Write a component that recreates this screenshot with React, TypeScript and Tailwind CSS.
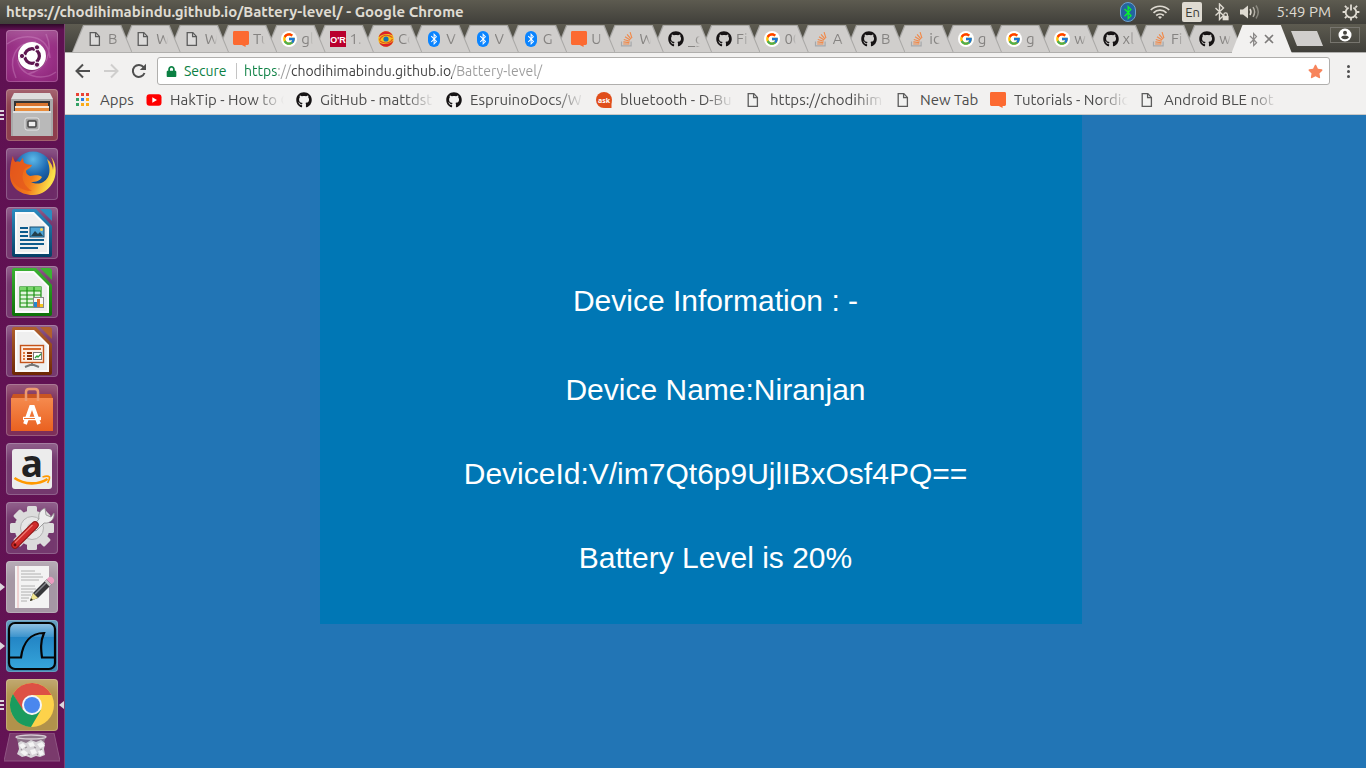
import React from "react";
import { FaBluetoothB, FaGithub, FaLock, FaStar } from "react-icons/fa";
import { FcGoogle } from "react-icons/fc";

const barFont = "font-['Ubuntu','Noto_Sans',sans-serif]";

/* ---------- small favicons ---------- */

function PageIcon() {
  return (
    <svg viewBox="0 0 16 16" className="size-4 shrink-0" fill="none" stroke="#5c5c5c" strokeWidth="1.3">
      <path d="M2.2 1.6h5.6l3.6 3.8v9H2.200z" fill="#f4f4f4" fillOpacity=".35" />
      <path d="M7.600 1.8v3.800h3.800" />
    </svg>
  );
}

function SpeechIcon() {
  return (
    <svg viewBox="0 0 16 16" className="size-4 shrink-0">
      <path d="M1.4 0h13.2Q16 0 16 1.4v11.2q0 1.4-1.4 1.4H12.6v2L8.8 14H1.4Q0 14 0 12.6V1.4Q0 0 1.4 0z" fill="#fc6a31" />
    </svg>
  );
}

function GoogleIcon() {
  return (
    <span className="flex size-4 shrink-0 items-center justify-center rounded-full bg-white">
      <FcGoogle className="size-[14px]" />
    </span>
  );
}

function OReillyIcon() {
  return (
    <svg viewBox="0 0 16 16" className="size-4 shrink-0">
      <rect width="16" height="16" fill="#b9002d" />
      <text x="8" y="11.500" textAnchor="middle" fontFamily="Liberation Sans, sans-serif" fontWeight="700" fontSize="9" fill="#fff">
        O'R
      </text>
    </svg>
  );
}

function SwirlIcon() {
  return (
    <svg viewBox="0 0 16 16" className="size-4 shrink-0">
      <circle cx="8" cy="8" r="7.8" fill="#f5c21b" />
      <path d="M.6 6.2C1.6 2.600 4.600.2 8 .2c3.200 0 5.600 1.800 7 4.600C12 2.400 5 2 .6 6.200z" fill="#d8232a" />
      <path d="M15.400 9.800c-1 3.600-4 6-7.400 6-3.200 0-5.600-1.800-7-4.600 3 2.400 10 2.800 14.400-1.400z" fill="#d8232a" />
      <path d="M1.500 9.500C3 4.500 9 2.500 14.500 6.500M14.500 8C13 12 7 13.500 2 10" fill="none" stroke="#e2511f" strokeWidth="1.100" />
      <circle cx="8" cy="8" r="3.300" fill="#f5c21b" />
      <circle cx="8" cy="8" r="2.600" fill="#1673b1" />
    </svg>
  );
}

function BluetoothIcon() {
  return (
    <span className="flex size-4 shrink-0 items-center justify-center">
      <span className="flex h-4 w-3 items-center justify-center rounded-full bg-[#0a84ff]">
        <FaBluetoothB className="size-3 text-white" />
      </span>
    </span>
  );
}

function GithubIcon() {
  return <FaGithub className="size-4 shrink-0 text-[#161314]" />;
}

function StackIcon() {
  return (
    <svg viewBox="0 0 16 16" className="size-4 shrink-0" fill="none">
      <path d="M2.500 10.500v4.400h9.600v-4.400" stroke="#a5a8ab" strokeWidth="1.200" />
      <g stroke="#f08a4b" strokeWidth="1.200">
        <path d="M4.200 13h6.200M4.300 10.900l6.100.7M4.800 8.500l5.900 1.800M6 5.800l5.200 3.200M8.100 3.300l4 4.800M11.100 1.200l1.800 6" />
      </g>
    </svg>
  );
}

function YoutubeIcon() {
  return (
    <svg viewBox="0 0 16 16" className="size-4 shrink-0">
      <rect x=".5" y="2.200" width="15" height="11.600" rx="3" fill="#f00" />
      <path d="M6.300 5.300v5.400L11 8z" fill="#fff" />
    </svg>
  );
}

function AskIcon() {
  return (
    <svg viewBox="0 0 16 16" className="size-4 shrink-0">
      <circle cx="8" cy="8" r="8" fill="#e04e1b" />
      <path d="M8 16h7.500V9z" fill="#e04e1b" />
      <text x="8" y="10.500" textAnchor="middle" fontFamily="Noto Sans, sans-serif" fontWeight="700" fontSize="7" fill="#fff">
        ask
      </text>
    </svg>
  );
}

function AppsIcon() {
  const colours = ["#ea4335", "#ea4335", "#ea4335", "#34a065", "#2f7de1", "#fbab18", "#34a065", "#fbab18", "#fbab18"];
  return (
    <svg viewBox="0 0 16 16" className="size-4 shrink-0">
      {colours.map((c, i) => (
        <rect key={i} x={(i % 3) * 5} y={Math.floor(i / 3) * 5 + 1} width="3" height="3" fill={c} />
      ))}
    </svg>
  );
}

const icons = {
  page: PageIcon,
  speech: SpeechIcon,
  google: GoogleIcon,
  oreilly: OReillyIcon,
  swirl: SwirlIcon,
  bluetooth: BluetoothIcon,
  github: GithubIcon,
  stack: StackIcon,
  youtube: YoutubeIcon,
  ask: AskIcon,
  apps: AppsIcon,
};
type IconName = keyof typeof icons;

/* ---------- launcher ---------- */

function DocBase({ id, dark, light }: { id: string; dark: string; light: string }) {
  return (
    <>
      <defs>
        <linearGradient id={id} x1="0" y1="0" x2="0" y2="1">
          <stop offset="0" stopColor={light} />
          <stop offset="1" stopColor={dark} />
        </linearGradient>
      </defs>
      <path d="M8 2h22l16 17v29q0 2-2 2H8q-2 0-2-2V4q0-2 2-2z" fill={`url(#${id})`} />
      <path d="M9 5h19l15 15v27H9z" fill="#fbfbfb" />
      <path d="M11 7h16l14 14v24H11z" fill="#e9e9e9" opacity=".7" />
      <path d="M34 2h9q3 0 3 3v9z" fill={light} />
    </>
  );
}

const tiles: { name: string; bg: string; left?: "bars" | "arrow"; right?: boolean; art: React.ReactNode }[] = [
  {
    name: "Search your computer",
    bg: "bg-[radial-gradient(circle,#b45fa6_0%,#9b3288_50%,#872073_100%)]",
    art: (
      <>
        <g fill="none" stroke="#e0a8d8" strokeOpacity=".3" strokeWidth="1.500">
          <path d="M1 14C18 2 42 4 44 28M10 48C2 30 8 12 30 12M50 42C36 52 14 46 12 30M40 4c8 18 0 36-18 40" />
        </g>
        <circle cx="26" cy="26.500" r="14.500" fill="#5b1049" opacity=".35" />
        <circle cx="26" cy="26" r="14" fill="#fff" />
        <circle cx="26" cy="26" r="7.300" fill="none" stroke="#5e1650" strokeWidth="3.400" />
        <g stroke="#fff" strokeWidth="1.300">
          <path d="M26 26H15M26 26l5.500-9.500M26 26l5.500 9.500" />
        </g>
        <circle cx="26" cy="26" r="5.500" fill="#fff" />
        <g fill="#5e1650" stroke="#fff" strokeWidth="1">
          <circle cx="16" cy="26" r="2.600" />
          <circle cx="31" cy="17.300" r="2.600" />
          <circle cx="31" cy="34.700" r="2.600" />
        </g>
      </>
    ),
  },
  {
    name: "Files",
    bg: "bg-[#8d3d4c]",
    left: "bars",
    art: (
      <>
        <path d="M8 4h36l3 6H5z" fill="#dedede" />
        <path d="M5 10h42v37H5z" fill="#a9a9a9" />
        <path d="M8 12h36v11H8z" fill="#333" />
        <path d="M10 14h32v3H10z" fill="#d8742e" />
        <path d="M9 17h34v3H9z" fill="#f8ead8" />
        <path d="M9 19h34v3H9z" fill="#e98d3c" />
        <path d="M7 22h38v25H7z" fill="#b9b9b9" />
        <path d="M7 22h38v2H7z" fill="#e0e0e0" />
        <rect x="19" y="29" width="14" height="12" rx="2" fill="#a2a2a2" stroke="#e5e5e5" />
        <rect x="22" y="32" width="8" height="6" rx="1" fill="#eee" stroke="#444" strokeWidth="1.500" />
      </>
    ),
  },
  {
    name: "Firefox Web Browser",
    bg: "bg-[#6d2a67]",
    art: (
      <>
        <defs>
          <radialGradient id="ffGlobe" cx=".5" cy=".2" r=".8">
            <stop offset="0" stopColor="#5cb8e8" />
            <stop offset=".5" stopColor="#1c67b0" />
            <stop offset="1" stopColor="#14386f" />
          </radialGradient>
          <linearGradient id="ffFox" x1="0" y1="0" x2="1" y2=".3">
            <stop offset="0" stopColor="#e0501c" />
            <stop offset=".6" stopColor="#f27a1a" />
            <stop offset="1" stopColor="#fbe04a" />
          </linearGradient>
        </defs>
        <circle cx="27" cy="23" r="19.500" fill="url(#ffGlobe)" />
        <path
          d="M7 8c0 3 1 4 2 6q3-1 5 0l3-4q0 4 1 5c2 1 4 2 8 2-1 3-5 4-6 6 0 3 2 4 4 5 4 0 7-2 12 1-2 4-6 5-11 5 6 3 13 2 17-5 3-6 1-12-1-18 4 3 6 8 6 11 1-5 0-9-2-13 5 5 6 15 3 23-4 9-12 15-21 15C13 47 4 38 4 27c0-8 1-13 3-19z"
          fill="url(#ffFox)"
        />
        <path d="M7 8c0 3 1 4 2 6q3-1 5 0l3-4q0 4 1 5c2 1 4 2 8 2-3 2-8 2-9 8-2 6 2 14 9 18C13 43 6 35 5 26c0-7 0-12 2-18z" fill="#e4571d" opacity=".7" />
      </>
    ),
  },
  {
    name: "LibreOffice Writer",
    bg: "bg-[#75376e]",
    art: (
      <>
        <DocBase id="docBlue" dark="#063f66" light="#2b8cc0" />
        <path d="M14 21h8M14 25h8M14 29h8M14 33h24M14 37h24M14 41h18" stroke="#0d5b8c" strokeWidth="2" />
        <rect x="24" y="20" width="14" height="10" fill="#4ea5d6" stroke="#174e73" />
        <path d="M25 29l4-5 3 3 2-2 3 4z" fill="#24404c" />
        <circle cx="35.500" cy="22.500" r="1.500" fill="#ffd34d" />
      </>
    ),
  },
  {
    name: "LibreOffice Calc",
    bg: "bg-[#75376e]",
    art: (
      <>
        <DocBase id="docGreen" dark="#0d7008" light="#3cb233" />
        <rect x="14" y="21" width="21" height="20" fill="#e2f6dd" stroke="#1c9113" strokeWidth="1.200" />
        <path d="M14 21h21v4H14z" fill="#7bd66c" />
        <path d="M14 25h21M14 29h21M14 33h21M14 37h21M21 21v20M28 21v20" stroke="#1c9113" strokeWidth="1.200" />
        <rect x="27.500" y="31.500" width="10" height="10" fill="#f7f7f7" stroke="#888" />
        <path d="M28 36h3v5h-3z" fill="#2288cf" />
        <path d="M31 33h3v8h-3z" fill="#e0702a" />
        <path d="M34 38h3v3h-3z" fill="#f3c61f" />
      </>
    ),
  },
  {
    name: "LibreOffice Impress",
    bg: "bg-[#75376e]",
    art: (
      <>
        <DocBase id="docBrown" dark="#6d2704" light="#b1602d" />
        <rect x="14.500" y="20.500" width="23" height="17" fill="#fdeee2" stroke="#c4531a" strokeWidth="1.400" />
        <path d="M17 24h18" stroke="#d66a2e" strokeWidth="2" />
        <path d="M17 28h2M17 31h2M17 34h2" stroke="#e07a3c" strokeWidth="2" />
        <path d="M21 28h5M21 31h5M21 34h5" stroke="#8c3308" strokeWidth="2" />
        <rect x="27.500" y="27.500" width="8" height="7" fill="#fff" stroke="#777" />
        <path d="M29 33l2-2 1 1 3-3" fill="none" stroke="#29a339" strokeWidth="1.300" />
        <path d="M26 38v2M19 42l5-2h4l5 2" fill="none" stroke="#777" strokeWidth="2" />
      </>
    ),
  },
  {
    name: "Ubuntu Software",
    bg: "bg-[#7d2f5a]",
    art: (
      <>
        <defs>
          <linearGradient id="bag" x1="0" y1="0" x2="0" y2="1">
            <stop offset="0" stopColor="#f58a4e" />
            <stop offset="1" stopColor="#ea6120" />
          </linearGradient>
        </defs>
        <path d="M7 10h38l2 5H5z" fill="#c95522" />
        <path d="M5 14h42v33H5z" fill="url(#bag)" />
        <path d="M20 17V8q0-3 3-3h6q3 0 3 3v9" fill="none" stroke="#ed9a70" strokeWidth="2.500" />
        <g stroke="#fff" fill="none">
          <path d="M19 40l6-17h2l6 17" strokeWidth="3.800" />
          <path d="M17 34.500h18" strokeWidth="3.400" />
        </g>
        <path d="M18 34.500h11" stroke="#ed7635" strokeWidth="1" />
      </>
    ),
  },
  {
    name: "Amazon",
    bg: "bg-[#74386e]",
    art: (
      <>
        <rect x="6" y="6" width="40" height="40" rx="3" fill="#ececec" />
        <text x="26" y="34" textAnchor="middle" fontFamily="Open Sans, sans-serif" fontWeight="700" fontSize="37" fill="#222">
          a
        </text>
        <path d="M8.500 35c10 7 24 7 33 1" fill="none" stroke="#f90" strokeWidth="2.600" />
        <path d="M36.500 34c3-1 6-1 7 0 .5 2-1 4-2 6" fill="none" stroke="#f90" strokeWidth="1.700" />
      </>
    ),
  },
  {
    name: "System Settings",
    bg: "bg-[#74386e]",
    art: (
      <>
        <g fill="#dcdcdc">
          {[0, 45, 90, 135].map((a) => (
            <rect key={a} x="21" y="4" width="10" height="44" rx="1.500" transform={`rotate(${a} 26 26)`} />
          ))}
          <circle cx="26" cy="26" r="17.500" />
        </g>
        <circle cx="26" cy="26" r="11.500" fill="#e6e6e6" stroke="#b4b4b4" />
        <circle cx="26" cy="26" r="5" fill="#c4c4c4" />
        <path d="M26 25l7-8c-1-5 1-9 6-11l1 7 5 2 3-4c1 6-4 11-10 10l-8 8z" fill="#ececec" stroke="#8d8d8d" strokeWidth=".8" />
        <path d="M9 43L29 23" stroke="#8e1414" strokeWidth="7.500" strokeLinecap="round" />
        <path d="M9 43L29 23" stroke="#cf2b2b" strokeWidth="5.500" strokeLinecap="round" />
        <path d="M9 40.500L26.500 23" stroke="#ee7b74" strokeWidth="1.300" />
        <circle cx="9" cy="43" r="1.400" fill="#5d0c0c" />
      </>
    ),
  },
  {
    name: "Text Editor",
    bg: "bg-[#a597a4]",
    left: "arrow",
    art: (
      <>
        <path d="M9 5h34v42H9z" fill="#f3f3f3" />
        <path d="M12 5v42" stroke="#eab0b0" />
        <path
          d="M15 10h14M15 13h20M15 16h22M15 19h18M15 25h14M15 28h15M15 31h12M15 34h10M15 37h8M15 40h6"
          stroke="#b0b0b0"
          strokeWidth="1"
        />
        <path d="M24 40l3-8 14-14 5 5-14 14z" fill="#36373a" />
        <path d="M24 40l3-8 5 5z" fill="#f0e48f" />
        <path d="M24 40l1-3 2 2z" fill="#222" />
        <path d="M38.500 20.500l2-2 5 5-2 2z" fill="#c8c8c8" />
        <path d="M40.500 18.500l2.500-2.500q2-1 4 1t1 4l-2.500 2.500z" fill="#eb9cc0" />
        <path d="M29 33l11-11" stroke="#85878c" strokeWidth="1.400" />
      </>
    ),
  },
  {
    name: "Wireshark",
    bg: "bg-[#3f86b0]",
    left: "arrow",
    art: (
      <>
        <defs>
          <linearGradient id="shark" x1="0" y1="0" x2="0" y2="1">
            <stop offset="0" stopColor="#93c4e4" />
            <stop offset=".3" stopColor="#3d94cd" />
            <stop offset=".31" stopColor="#2385c5" />
            <stop offset="1" stopColor="#36a5da" />
          </linearGradient>
        </defs>
        <rect x="3" y="3" width="46" height="46" rx="6" fill="url(#shark)" stroke="#050505" strokeWidth="2.200" />
        <path d="M3 37.500h12C17 22 25 13 38 13c-4 9-3 17-2 24.500h13" fill="none" stroke="#050505" strokeWidth="2.200" />
      </>
    ),
  },
  {
    name: "Google Chrome",
    bg: "bg-[#b1924b]",
    left: "bars",
    right: true,
    art: (
      <>
        <circle cx="26" cy="26" r="22" fill="#fdd24a" />
        <path d="M26 16h19.600A22 22 0 0 0 6.950 15L16 31z" fill="#dd5144" />
        <path d="M6.950 15A22 22 0 0 0 25 48l10-17-9 5-9-5z" fill="#1a9b5e" />
        <circle cx="26" cy="26" r="10" fill="#f5f5f5" />
        <circle cx="26" cy="26" r="8" fill="#4a87ee" />
      </>
    ),
  },
];

function Launcher() {
  return (
    <nav
      aria-label="Launcher"
      className="flex w-[65px] shrink-0 flex-col items-center border-r border-[#7d4272] bg-[linear-gradient(to_bottom,#2f0829,#5f1152_6px,#631354)] pt-[6px]"
    >
      <div className="flex w-full flex-col items-center gap-[7px]">
        {tiles.map((t) => (
          <div key={t.name} className="relative flex w-full justify-center">
            {t.left === "bars" && (
              <span className="absolute top-1/2 left-0 flex -translate-y-1/2 flex-col gap-[2px]">
                <i className="block h-[2px] w-1 bg-[#ddd5dc]" />
                <i className="block h-[2px] w-1 bg-[#ddd5dc]" />
                <i className="block h-[2px] w-1 bg-[#ddd5dc]" />
              </span>
            )}
            {t.left === "arrow" && (
              <span className="absolute top-1/2 left-0 h-2 w-[5px] -translate-y-1/2 bg-[#ddd5dc] [clip-path:polygon(0_0,100%_50%,0_100%)]" />
            )}
            <button
              type="button"
              aria-label={t.name}
              className={`size-[52px] rounded-[4px] shadow-[inset_0_0_0_1px_rgba(255,255,255,0.2),inset_0_14px_12px_-6px_rgba(255,255,255,0.22)] ${t.bg}`}
            >
              <svg viewBox="0 0 52 52" className="size-[52px] overflow-visible">
                {t.art}
              </svg>
            </button>
            {t.right && (
              <span className="absolute top-1/2 right-0 h-2 w-[5px] -translate-y-1/2 bg-[#ddd5dc] [clip-path:polygon(100%_0,0_50%,100%_100%)]" />
            )}
          </div>
        ))}
      </div>
      <button type="button" aria-label="Trash" className="mt-[2px]">
        <svg viewBox="0 0 56 29" className="h-[29px] w-14">
          <path d="M6 0h44l6 28H0z" fill="#7a3a6c" stroke="#8f5583" />
          <path d="M12 3h30l-3 10H15z" fill="#8c7589" />
          <path d="M14 10l3-2 5 2 5-3 5 2 5-2 4 3-1 6 1 6-5 2-4-1-5 2-5-2-4 1-5-3 2-5z" fill="#d6d3d7" />
          <g fill="#f4f4f4">
            <path d="M15 12l4-2 3 3-4 3zM24 10l5-1 2 4-5 1zM33 11l5-2 3 4-5 2zM16 19l4-2 4 3-3 3zM26 17l5-1 2 4-5 2zM34 18l4-1 2 4-4 2z" />
          </g>
          <path d="M21 15l2-1M30 14l2 1M24 21l2 1M33 21l1 1M38 16l-2 1M17 17l1-1" stroke="#9a949a" strokeWidth="1.200" />
          <ellipse cx="27" cy="4" rx="15" ry="2" fill="none" stroke="#d6ccd4" strokeWidth="1.300" />
        </svg>
      </button>
    </nav>
  );
}

/* ---------- system bar ---------- */

function SystemBar() {
  return (
    <header className="flex h-6 shrink-0 items-center justify-between bg-[linear-gradient(to_bottom,#5d5b50,#403f3a)] px-[6px] text-[15px] leading-6 text-[#dfdbd2]">
      <span className="font-bold whitespace-nowrap">https://chodihimabindu.github.io/Battery-level/ - Google Chrome</span>
      <div className="flex items-center">
        <span className="flex h-5 w-4 items-center justify-center rounded-full border border-[#6fa0cc] bg-[#24649f]">
          <FaBluetoothB className="size-[15px] text-[#0cf32e]" />
        </span>
        <svg viewBox="0 0 20 16" className="ml-[14px] h-4 w-5" fill="none" stroke="#dfdbd2" strokeWidth="1.700">
          <path d="M.8 6c5-5 13.400-5 18.400 0M3.500 8.800c3.600-3.600 9.400-3.600 13 0M6.200 11.500c2.200-2 5.400-2 7.600 0" />
          <path d="M10 15l-2-2q2-1.500 4 0z" fill="#dfdbd2" stroke="none" />
        </svg>
        <span className="ml-3 flex h-5 w-5 items-center justify-center rounded-[2px] bg-[#dfdbd2] text-[13px] leading-5 text-[#3c3b37]">
          En
        </span>
        <svg viewBox="0 0 16 18" className="ml-3 h-[18px] w-4" fill="none" stroke="#dfdbd2" strokeWidth="1.400">
          <path d="M1.500 5l8 7.500-4 4V1l4 4-8 7.500" />
          <path d="M9.800 13v-1.300a1.800 1.800 0 0 1 3.600 0V13" strokeWidth="1.200" />
          <path d="M8.600 12.800h6v4.500h-6z" fill="#dfdbd2" stroke="none" />
        </svg>
        <svg viewBox="0 0 20 16" className="ml-[10px] h-4 w-5" fill="none" stroke="#dfdbd2" strokeWidth="1.500">
          <path d="M0 5.500h3L8 1.500v13l-5-4H0z" fill="#dfdbd2" stroke="none" />
          <path d="M10 5q2 3 0 6" />
          <path d="M13 3.200q3.200 4.800 0 9.600" opacity=".7" />
          <path d="M16 1.500q4.600 6.500 0 13" opacity=".4" />
        </svg>
        <time className="ml-4 whitespace-nowrap">5:49 PM</time>
        <svg viewBox="0 0 18 18" className="ml-[11px] size-[18px]" fill="none" stroke="#dfdbd2" strokeWidth="1.800">
          <path d="M6.600 4.600a5.300 5.300 0 1 0 4.800 0" />
          <path d="M9 1.500v6" />
          <path d="M4.700 4.700L2.900 2.900M13.300 4.700l1.800-1.800M3 9H.6M15 9h2.400M4.700 13.300l-1.800 1.800M13.300 13.300l1.800 1.800M9 15v2.400" />
        </svg>
      </div>
    </header>
  );
}

/* ---------- browser ---------- */

const tabs: [IconName, string][] = [
  ["page", "B"],
  ["page", "W"],
  ["page", "W"],
  ["speech", "Tu"],
  ["google", "gl"],
  ["oreilly", "1."],
  ["swirl", "Co"],
  ["bluetooth", "V"],
  ["bluetooth", "V"],
  ["bluetooth", "G"],
  ["speech", "U"],
  ["stack", "W"],
  ["github", "_g"],
  ["github", "Fi"],
  ["google", "00"],
  ["stack", "A"],
  ["github", "B"],
  ["stack", "ic"],
  ["google", "g"],
  ["google", "g"],
  ["google", "w"],
  ["github", "xl"],
  ["stack", "Fi"],
  ["github", "w"],
];

function TabStrip() {
  return (
    <div className="flex h-[29px] items-end border-b border-[#b0afad] bg-[linear-gradient(to_bottom,#5d5b50,#403f3a)] pr-[6px] pl-[7px]">
      <div role="tablist" className="flex min-w-0 flex-1 pr-3">
        {tabs.map(([icon, label], i) => {
          const Icon = icons[icon];
          return (
            <button
              key={i}
              type="button"
              role="tab"
              aria-selected="false"
              style={{ zIndex: tabs.length - i }}
              className="relative -mr-3 flex h-[27px] min-w-0 flex-1 basis-0 items-center bg-[#a9a8a6] text-left text-[15px] text-[#858381] [clip-path:polygon(11px_0,calc(100%-11px)_0,100%_100%,0_100%)]"
            >
              <span className="absolute inset-0 bg-[#d0cecc] [clip-path:polygon(12px_1px,calc(100%-12px)_1px,calc(100%-1px)_100%,1px_100%)]" />
              <span className="relative flex items-center gap-1 pl-4">
                <Icon />
                <span className="w-3 leading-5 whitespace-nowrap [mask-image:linear-gradient(to_right,black_60%,transparent)]">
                  {label}
                </span>
              </span>
            </button>
          );
        })}
        <div
          role="tab"
          aria-selected="true"
          className="relative z-30 -mr-3 -mb-px flex h-7 min-w-0 flex-1 basis-0 items-center bg-[#f2f1f0] [clip-path:polygon(11px_0,calc(100%-11px)_0,100%_100%,0_100%)]"
        >
          <div className="flex items-center gap-[2px] pl-[14px]">
            <FaBluetoothB className="size-[15px] shrink-0 text-[#8b8988]" />
            <button type="button" aria-label="Close tab" className="flex size-3 items-center justify-center">
              <svg viewBox="0 0 10 10" className="size-[10px]" stroke="#7d7b7a" strokeWidth="1.600">
                <path d="M1 1l8 8M9 1L1 9" />
              </svg>
            </button>
          </div>
        </div>
      </div>
      <button
        type="button"
        aria-label="New tab"
        className="mb-[6px] ml-[-1px] h-[15px] w-8 bg-[#d0cecc] [clip-path:polygon(0_0,26px_0,100%_100%,6px_100%)]"
      />
      <button
        type="button"
        aria-label="Profile"
        className="mb-[9px] ml-[7px] flex h-4 w-[30px] items-center justify-center border border-[#77756e]"
      >
        <svg viewBox="0 0 14 14" className="size-[14px]">
          <circle cx="7" cy="7" r="6.500" fill="#fff" />
          <circle cx="7" cy="4.700" r="2" fill="#45443f" />
          <path d="M3.200 9.800c0-3 7.600-3 7.600 0q-3.800 3-7.600 0z" fill="#45443f" />
        </svg>
      </button>
    </div>
  );
}

function AddressBar() {
  return (
    <div className="flex h-8 items-center pt-1 pr-[10px] pl-[10px]">
      <button type="button" aria-label="Back" className="size-4">
        <svg viewBox="0 0 16 16" className="size-4" fill="none" stroke="#4f4f4f" strokeWidth="2">
          <path d="M15 8H2.500M8 1.500L1.500 8 8 14.500" />
        </svg>
      </button>
      <button type="button" aria-label="Forward" disabled className="ml-3 size-4">
        <svg viewBox="0 0 16 16" className="size-4" fill="none" stroke="#cfcecd" strokeWidth="2">
          <path d="M1 8h12.500M8 1.500L14.500 8 8 14.500" />
        </svg>
      </button>
      <button type="button" aria-label="Reload" className="ml-3 size-4">
        <svg viewBox="0 0 16 16" className="size-4" fill="none" stroke="#4f4f4f" strokeWidth="2">
          <path d="M13.500 10A6 6 0 1 1 12.600 4.200" />
          <path d="M15 .8v6.200H8.800z" fill="#4f4f4f" stroke="none" />
        </svg>
      </button>
      <div className="ml-[10px] flex h-7 min-w-0 flex-1 items-center rounded-[3px] border border-[#b0afad] bg-white pr-[6px] pl-2 text-[14px] leading-6">
        <FaLock className="size-[11px] text-[#0b8043]" />
        <label htmlFor="address" className="ml-[7px] w-11 whitespace-nowrap text-[#0b8043]">
          Secure
        </label>
        <span className="ml-2 h-4 w-px bg-[#c4c4c4]" />
        <input
          id="address"
          type="text"
          defaultValue="https://chodihimabindu.github.io/Battery-level/"
          className="ml-[7px] min-w-0 flex-1 bg-[linear-gradient(to_right,#0b8043_34px,#9b9b9b_34px_47px,#3b3b3b_47px_208px,#9b9b9b_208px)] bg-clip-text text-transparent outline-none"
        />
        <button type="button" aria-label="Bookmark this page">
          <FaStar className="size-[15px] text-[#f7845b]" />
        </button>
      </div>
      <button type="button" aria-label="Menu" className="ml-[10px] flex h-4 w-4 flex-col items-center justify-center gap-[2px]">
        <i className="block size-[3px] rounded-full bg-[#4f4f4f]" />
        <i className="block size-[3px] rounded-full bg-[#4f4f4f]" />
        <i className="block size-[3px] rounded-full bg-[#4f4f4f]" />
      </button>
    </div>
  );
}

const bookmarks: [IconName, string, "short" | "mid" | "full"][] = [
  ["apps", "Apps", "short"],
  ["youtube", "HakTip - How to C", "full"],
  ["github", "GitHub - mattdst", "full"],
  ["github", "EspruinoDocs/W", "full"],
  ["ask", "bluetooth - D-Bu", "full"],
  ["page", "https://chodihim", "full"],
  ["page", "New Tab", "mid"],
  ["speech", "Tutorials - Nordic", "full"],
  ["page", "Android BLE not", "full"],
];

const bookmarkWidth = { short: "w-[58px]", mid: "w-[82px]", full: "w-[138px]" };

function BookmarkBar() {
  return (
    <nav aria-label="Bookmarks" className="flex h-[30px] items-center gap-3 overflow-hidden border-b border-[#c9c8c6] pl-[11px]">
      {bookmarks.map(([icon, label, size], i) => {
        const Icon = icons[icon];
        return (
          <a key={i} href="#" className={`flex shrink-0 items-center gap-2 ${bookmarkWidth[size]}`}>
            <Icon />
            <span
              className={`min-w-0 flex-1 text-[15px] leading-5 whitespace-nowrap text-[#4c4c4c] ${
                size === "full" ? "[mask-image:linear-gradient(to_right,black_75%,transparent)]" : ""
              }`}
            >
              {label}
            </span>
          </a>
        );
      })}
    </nav>
  );
}

function DevicePage() {
  return (
    <main className="flex-1 bg-[#2275b5]">
      <section className="ml-[255px] flex w-[762px] flex-col items-center gap-[50px] bg-[#0077b5] pt-[169px] pb-[49px] pl-[29px] font-['Liberation_Sans',Arial,sans-serif] text-[30px] leading-[34px] text-white">
        <h1 className="mb-[5px]">Device Information : -</h1>
        <p>Device Name:Niranjan</p>
        <p>DeviceId:V/im7Qt6p9UjlIBxOsf4PQ==</p>
        <p>Battery Level is 20%</p>
      </section>
    </main>
  );
}

export default function App() {
  return (
    <div className={`flex min-h-screen flex-col overflow-hidden ${barFont}`}>
      <SystemBar />
      <div className="flex flex-1">
        <Launcher />
        <div className="flex min-w-0 flex-1 flex-col bg-[#f2f1f0]">
          <TabStrip />
          <AddressBar />
          <BookmarkBar />
          <DevicePage />
        </div>
      </div>
    </div>
  );
}
